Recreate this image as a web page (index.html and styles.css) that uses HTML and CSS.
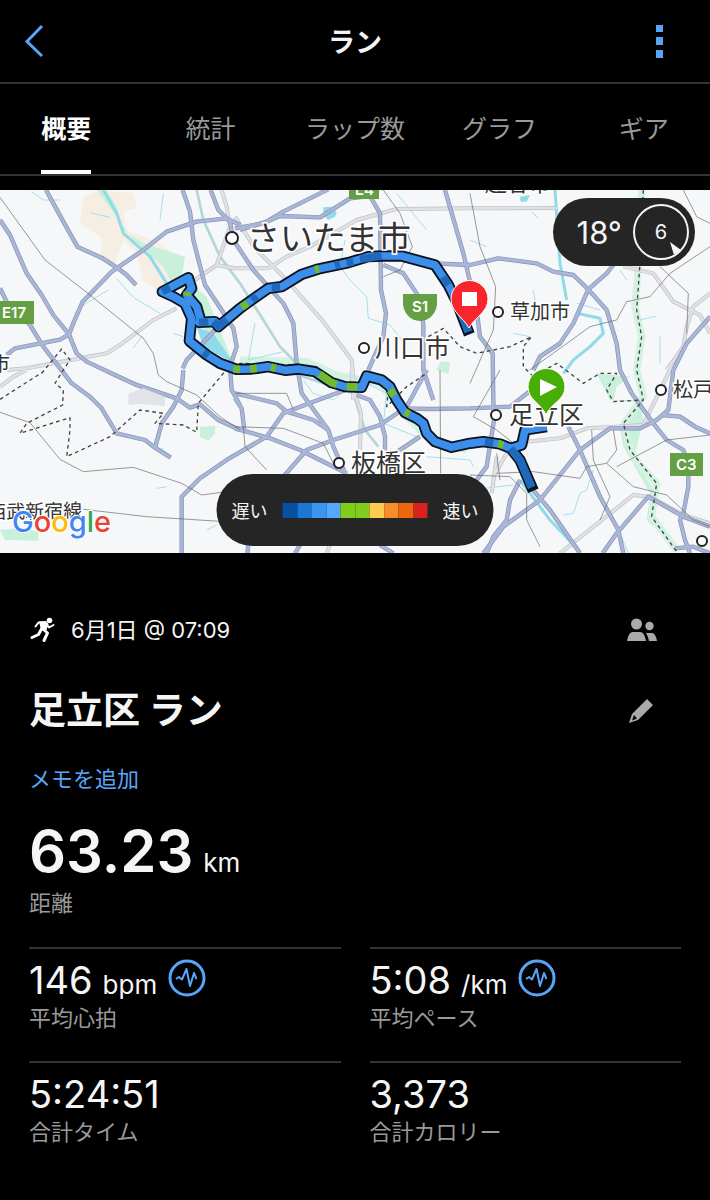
FILE: index.html
```html
<!DOCTYPE html>
<html lang="ja">
<head>
<meta charset="utf-8">
<meta name="viewport" content="width=device-width, initial-scale=1">
<title>ラン</title>
<link rel="stylesheet" href="styles.css">
</head>
<body>
<header class="topbar">
  <button class="icon-button" aria-label="戻る"><svg width="20" height="34" viewBox="0 0 20 34"><path class="chevron" d="M18 2 3 17.5 18 32"/></svg></button>
  <h1 class="topbar-title">ラン</h1>
  <button class="icon-button menu-button" aria-label="メニュー"><svg width="7" height="34" viewBox="0 0 7 34"><path class="dots" d="M0 1h7v7H0zM0 13h7v8H0zM0 26h7v8H0z"/></svg></button>
</header>
<nav class="tabs">
  <a class="tab active" href="#summary" aria-current="page">概要</a>
  <a class="tab" href="#stats">統計</a>
  <a class="tab" href="#laps">ラップ数</a>
  <a class="tab" href="#charts">グラフ</a>
  <a class="tab" href="#gear">ギア</a>
</nav>
<main id="summary">
<section class="map" aria-label="ルート">
<svg class="map-canvas" viewBox="0 190 710 363">
  <defs>
    <g id="roads">
      <path d="M138 570 190 665 232 740 308 775 350 802 380 825 408 855"/>
      <path d="M0 660 30 705 80 820 125 885 160 945 207 1003 230 1060 260 1085 345 1125 405 1153 530 1195 570 1223 600 1213 655 1260 720 1290"/>
      <path d="M20 1065 45 1045 180 1019 207 1003 222 965 248 905 335 815 430 750 500 695 590 665 680 655 720 675"/>
      <path d="M0 865 20 905 90 975 130 1040 215 1150 270 1190 305 1225 350 1300 435 1320 465 1343 512 1373"/>
      <path d="M548 570 570 635 580 720 615 855 665 930 700 985 710 1040 690 1100 695 1170 720 1215"/>
      <path d="M632 570 655 630 690 665 700 720 760 810 850 910 880 970 890 1090 905 1180 985 1290 1000 1340 1040 1430"/>
      <path d="M720 690 800 665 850 635 960 580 985 568"/>
      <path d="M705 685 790 670 840 648 960 652 1050 595 1110 588 1140 640 1143 870 1158 940 1150 1010 1105 1110"/>
      <path d="M1150 795 1210 820 1250 880 1270 970 1270 1110 1300 1200"/>
      <path d="M1335 570 1390 760 1430 930 1440 1010 1478 1060 1480 1200 1482 1260 1460 1400 1430 1440"/>
      <path d="M1305 790 1410 795 1495 775 1610 790 1660 815 1720 825 1765 868 1820 820 1840 795"/>
      <path d="M1765 868 1720 970 1680 1030 1620 1070 1600 1110"/>
      <path d="M1765 868 1820 930 1850 1030 1860 1110 1895 1180 1960 1270 2000 1320 2050 1350 2065 1390 2065 1460 2050 1540 2040 1560 2055 1620 2070 1660"/>
      <path d="M2130 950 2060 1030 2020 1110 2005 1230 1970 1260 1920 1285 1830 1285 1740 1350 1620 1500 1510 1580 1450 1660"/>
      <path d="M1215 1225 1290 1227 1410 1225 1530 1220 1620 1150"/>
      <path d="M1985 1245 2040 1250 2085 1280 2130 1300"/>
      <path d="M1705 1280 1740 1350 1800 1490 1855 1590 1870 1660"/>
      <path d="M1595 1465 1650 1530 1740 1660"/>
      <path d="M1808 1660 1850 1600 1945 1490 2050 1550 2130 1580"/>
      <path d="M2025 1645 2080 1640 2130 1660"/>
      <path d="M550 1110 545 1170 520 1220 485 1270 465 1343"/>
      <path d="M548 1105 560 1080 640 995 690 950"/>
      <path d="M545 1660 545 1490 600 1435 680 1380 800 1310 850 1240 940 1205 1050 1165 1140 1130"/>
      <path d="M705 1180 830 1210 860 1235 940 1260 985 1290"/>
      <path d="M705 1195 725 1225 733 1290M705 1285 810 1315 900 1350 960 1380 1040 1420"/>
      <path d="M850 1430 920 1350 1000 1320 1140 1275 1220 1220 1280 1110"/>
      <path d="M1070 1185 1110 1200 1140 1250 1155 1310 1155 1390M1170 1370 1260 1310"/>
      <path d="M1560 1440 1530 1500 1520 1560 1480 1610 1460 1660M745 1635 742 1660M900 1635 885 1660M1140 1635 1180 1660"/>
    </g>
    <g id="minor">
      <path d="M20 1110 80 1105 160 1090 320 1060 360 1035 460 960 530 925M585 840 650 795 690 680 680 620 665 570"/>
      <path d="M0 1160 40 1130 80 1110M650 795 705 805 805 805 860 770 930 740 1070 660 1190 627 1410 625 1670 624"/>
      <path d="M705 650 765 745 860 840 970 965 1055 1080 1065 1180 1083 1240 1080 1350M1055 1110 1060 1200"/>
      <path d="M1870 800 1960 820 2020 905 2100 945 2130 1000M2130 880 2080 920 2060 980 2050 1040 2000 1110M1580 1325 1680 1315 1760 1285 1850 1280 1930 1275 2010 1110"/>
      <path d="M1680 1660 1900 1485 1950 1490 2050 1545 2130 1570M1490 1370 1475 1480M1480 1430 1520 1360M990 1635 980 1660"/>
    </g>
  </defs>
  <rect class="land" x="0" y="190" width="710" height="363"/>
  <g transform="scale(.33333)">
    <path class="sand" d="M250 590 300 570 400 580 410 625 370 635 380 690 480 730 530 770 500 850 470 870 430 840 410 760 370 720 340 800 300 760 310 720 300 710 240 670Z"/>
    <path class="park" d="M290 570 320 570 350 620 370 690 430 730 555 770 545 830 620 890 700 1090 640 1020 590 960 580 880 520 860 490 800 400 720 350 650ZM600 1280 645 1278 645 1300 625 1322 600 1310ZM0 1590 60 1585 115 1595 115 1622 15 1620ZM1320 1085 1350 1085 1345 1122 1310 1110ZM1890 1130 1850 1160 1840 1205 1920 1205 1930 1260 1900 1380 1950 1450 1975 1490 1945 1520 1960 1580 2040 1650 1980 1600 1940 1560 1950 1480 1870 1340 1860 1280 1910 1200 1830 1200 1790 1120Z"/>
    <path class="park-line" d="M720 1080 920 1085 1010 1125 1140 1150 1220 1250 1280 1310 1400 1350"/>
    <path class="park-line" d="M1925 570 1915 800 1905 920 1925 1010 1910 1110 1930 1190 1870 1275 1905 1380 1970 1450 1955 1550 2030 1650"/>
    <path class="bank" d="M590 570 610 660 660 770 720 850 790 960 840 1040 895 1095M895 1125 1060 1180 1095 1290 1135 1340"/>
    <path class="water" d="M970 622 1000 620 1010 640 1005 650 985 660 970 645ZM1560 590 1590 585 1580 605 1562 605ZM590 980 640 1000 700 1090 610 1040Z"/>
    <path class="river" d="M310 570 350 640 370 700 450 770 500 850M1665 570 1680 790 1700 900M1730 940 1800 955 1810 1000 1770 1040 1720 1080 1690 1120M1560 1440 1650 1560 1740 1655"/>
    <path class="stream" d="M272 638 330 652M490 580 480 660M95 575 130 600 180 600M350 835 380 870 405 895 480 940M250 915 325 870M400 1045 425 1010M520 1000 550 1010M1035 720 1020 800 1050 840 1100 890 1105 955 1170 975 1205 1020M765 970 745 1080 850 1055M1190 580 1280 690M1595 635 1615 655M1410 720 1460 740M1540 1000 1590 1010M1600 870 1605 900M1730 910 1800 930M1860 810 1880 840M1970 950 1960 950 1920 960M1980 1010 1980 1090M910 1140 940 1180 1000 1200 1060 1150M1100 1150 1160 1180 1150 1270 1250 1310M1280 1370 1410 1380 1420 1400M1780 1410 1760 1470 1740 1480 1720 1540 1690 1545M1770 1420 1860 1600 1885 1660M1410 1470 1540 1455M470 1355 490 1345M470 1465 500 1460M620 1590 650 1575"/>
    <use href="#minor" class="minor-edge"/><use href="#minor" class="minor-fill"/>
    <use href="#roads" class="road-edge"/><use href="#roads" class="road-fill"/>
    <path class="rail" d="M0 592 135 780 270 885 430 1015 460 1060 475 1125 500 1145 590 1185 660 1250 720 1290M0 1237 90 1268 180 1378 250 1415 400 1402 545 1450 605 1485 680 1475M250 1528 440 1550 660 1564M1410 580 1440 740 1487 860 1480 990 1410 1150M1150 570 1200 640 1237 740 1200 810 1150 830M1590 1110 1770 980 1850 960 1880 905 1950 890 2010 820 2130 740M2050 570 2090 650 2130 670M1980 800 2065 880 2060 1000M705 1280 850 1285 970 1330 1010 1410M730 1280 735 1340 800 1410M1320 1110 1322 1420M1490 1420 1600 1415 1740 1435 1760 1400 1820 1390 1900 1460 2000 1485 2080 1560 2130 1580M1775 1290 1780 1380 1830 1490 1800 1560M1840 1290 1850 1350 1820 1390M1850 1400 2000 1320 2130 1305M1500 1110 1420 1250 1490 1290 1560 1345M1410 1425 1530 1430 1580 1480 1580 1560 1620 1640M1500 1440 1490 1360M705 1180 860 1180 880 1230"/>
    <path class="border" d="M125 1120 185 1047 210 1080 190 1110 165 1150 190 1170 188 1215 80 1270 60 1300 210 1253 210 1290 200 1370 330 1310 420 1230 490 1240 465 1270 550 1275 590 1297 595 1210 670 1120 720 1090 900 1095M0 1198 130 1115M1285 1010 1330 985 1380 1040 1430 1060 1530 1040 1595 1010 1570 1040 1570 1100 1600 1130 1670 1090 1750 1150 1800 1120 1850 1120 1820 1170 1840 1205 1925 1200M1930 570 1920 790 1910 930 1925 1010 1910 1110 1930 1200 1870 1270 1890 1350 1970 1450 1955 1550 2030 1655M1165 1170 1160 1220 1220 1160 1280 1120"/>
    <path class="builtup" d="M385 1180 430 1165 495 1190 495 1218 430 1212 385 1215Z"/>
    <g id="route">
      <path class="route-outline" d="M1640 1280 1575 1290 1565 1335 1532 1345M1600 1472 1560 1380 1532 1345 1500 1332 1450 1325 1410 1330 1355 1342 1305 1325 1280 1300 1270 1270 1250 1255 1215 1238 1190 1200 1170 1160 1145 1140 1100 1128 1085 1162 1035 1160 995 1148 945 1115 895 1107 855 1111 805 1100 755 1107 710 1108 660 1090 620 1065 568 1023 575 955 555 910 520 890 487 875 565 833 575 865 560 885 590 920 600 955 597 967 645 965 655 980 720 925 755 900 805 865 845 860 905 823 955 807 1045 788 1105 770 1145 768 1205 768 1305 795 1345 855 1370 905 1408 1003"/>
      <path class="route-line" d="M1640 1280 1575 1290 1565 1335 1532 1345M1595 1462 1560 1380 1532 1345 1500 1332 1450 1325 1410 1330 1355 1342 1305 1325 1280 1300 1270 1270 1250 1255 1215 1238 1190 1200 1170 1160 1145 1140 1100 1128 1085 1162 1035 1160 995 1148 945 1115 895 1107 855 1111 805 1100 755 1107 710 1108 660 1090 620 1065 568 1023 575 955 555 910 520 890 487 875 565 833 575 865 560 885 590 920 600 955 597 967 645 965 655 980 720 925 755 900 805 865 845 860 905 823 955 807 1045 788 1105 770 1145 768 1205 768 1305 795 1345 855 1370 905 1405 995"/>
      <path class="route-slow" d="M1595 1462 1560 1380 1532 1345M1480 1329 1455 1325M1330 830 1345 855M1390 955 1405 995M1080 778 1145 768M1005 797 1020 793M1040 789 1060 785M755 900 770 888M815 862 840 860M640 965 655 978 680 958M487 875 510 863M597 967 625 966M610 1057 625 1067"/>
      <path class="route-good" d="M700 1107 720 1108M750 1107 770 1105M813 1101 828 1105M958 1122 995 1148 1010 1153M1040 1160 1072 1161M1170 1170 1182 1188M1215 1236 1228 1243M1494 1330 1510 1336M562 876 560 888M725 922 742 910M945 809 957 806"/>
    </g>
  </g>
  <g class="roadsign">
    <path d="M0 301h34v23H0zM349 185h30v14h-30zM670 453h33v23h-33zM403 294h34v11q-3 15-17 16-14-1-17-16z"/>
    <text x="2" y="318">E17</text><text x="355" y="195">E4</text><text x="676" y="470">C3</text><text x="412" y="312">S1</text>
  </g>
  <g class="places">
    <text x="485" y="191" font-size="22">越谷市</text>
    <circle cx="232" cy="238" r="6"/><text x="247" y="250" font-size="33">さいたま市</text>
    <circle cx="364" cy="348" r="5"/><text x="375" y="357" font-size="25">川口市</text>
    <circle cx="498" cy="312" r="5"/><text x="510" y="319" font-size="20">草加市</text>
    <circle cx="496" cy="415" r="5"/><text x="509" y="424" font-size="25">足立区</text>
    <circle cx="339" cy="463" r="5"/><text x="351" y="472" font-size="25">板橋区</text>
    <circle cx="661" cy="390" r="5"/><text x="673" y="397" font-size="20">松戸市</text>
    <circle cx="702" cy="541" r="5"/>
    <text x="-9" y="371" font-size="19">市</text>
    <text x="-13" y="518" font-size="19" transform="rotate(-1 40 510)">西武新宿線</text>
  </g>
  <path class="pin-end" d="M469 328C463 317 451 312 451 299a18.500 18.500 0 0 1 37 0C488 312 475 317 469 328Z"/><path class="pin-glyph" d="M462 292h15v14h-15z"/>
  <path class="pin-start" d="M546 415C541 403 528 400 528 387a18.500 18.500 0 0 1 37 0C565 400 551 403 546 415Z"/><path class="pin-glyph" d="M540 379 557 387 540 396Z"/>
  <text class="google" x="12" y="532"><tspan fill="#4285f4">G</tspan><tspan fill="#ea4335">o</tspan><tspan fill="#fbbc05">o</tspan><tspan fill="#4285f4">g</tspan><tspan fill="#34a853">l</tspan><tspan fill="#ea4335">e</tspan></text>
</svg>
<div class="weather">
  <span>18°</span>
  <svg width="58" height="58" viewBox="0 0 58 58"><circle class="wind-ring" cx="29" cy="29" r="27"/><text class="wind-speed" x="29" y="36">6</text><path class="wind-arrow" d="M38 39 49 47 42 52Z"/></svg>
</div>
<div class="legend">
  <span>遅い</span>
  <div class="scale"><i class="s1"></i><i class="s2"></i><i class="s3"></i><i class="s4"></i><i class="s5"></i><i class="s5"></i><i class="s6"></i><i class="s7"></i><i class="s8"></i><i class="s9"></i></div>
  <span>速い</span>
</div>
</section>
<section class="details">
  <div class="row meta">
    <svg width="28" height="28" viewBox="0 0 28 28"><circle class="runner-fill" cx="20.500" cy="4.500" r="2.800"/><path class="runner-fill" d="M10 5.500 17 5 19.500 8 17.500 14 12 14Z"/><path class="runner" d="M15.500 6.500 9.500 6.500 6.500 10.500M18 8.500 20 11.500 24.500 9"/><path class="runner-leg" d="M14 13 18.500 17 15 24.500M12.500 13 9.500 18.500 3 21.500"/></svg>
    <time class="grow">6月1日 @ 07:09</time>
    <button class="icon-button" aria-label="公開設定"><svg class="grey" width="32" height="24" viewBox="0 0 32 24"><circle cx="10.500" cy="6" r="5.500"/><circle cx="23.500" cy="8" r="4.200"/><path d="M1 23Q2.500 14 7 14h7q4.500 0 6 9ZM20 15h6q3.500 0 5 8h-8q-1-5-3-8Z"/></svg></button>
  </div>
  <div class="row heading">
    <h2 class="grow">足立区 ラン</h2>
    <button class="icon-button" aria-label="名前を編集"><svg class="grey" width="32" height="26" viewBox="0 0 32 26"><path fill-rule="evenodd" d="M21 1 27 7 12 22 3 25 6 16ZM8 17 6 22.500 11 20.500Z"/></svg></button>
  </div>
  <a class="note" href="#note">メモを追加</a>
  <div class="distance"><strong>63.23</strong><span class="unit">km</span></div>
  <p class="label">距離</p>
  <dl class="stats">
    <div class="stat"><dd>146<span class="unit">bpm</span><svg class="pulse" width="38" height="38" viewBox="0 0 38 38"><circle cx="19" cy="19" r="17"/><path d="M8 20 11 18 14 20.500 18.500 10 22 27 26 14 28.500 20"/></svg></dd><dt class="label">平均心拍</dt></div>
    <div class="stat"><dd>5:08<span class="unit">/km</span><svg class="pulse" width="38" height="38" viewBox="0 0 38 38"><circle cx="19" cy="19" r="17"/><path d="M8 20 11 18 14 20.500 18.500 10 22 27 26 14 28.500 20"/></svg></dd><dt class="label">平均ペース</dt></div>
    <div class="stat"><dd>5:24:51</dd><dt class="label">合計タイム</dt></div>
    <div class="stat"><dd>3,373</dd><dt class="label">合計カロリー</dt></div>
  </dl>
</section>
</main>
</body>
</html>
```
FILE: styles.css
```css
* { box-sizing: border-box; }
body { margin: 0; background: #000; color: #f5f5f5; font-family: Inter, "Noto Sans CJK JP", sans-serif; overflow-x: hidden; }
h1, h2, p, dl, dd { margin: 0; }
a { text-decoration: none; }
svg { display: block; }
.icon-button { background: none; border: 0; padding: 0; color: inherit; display: flex; }

.topbar { display: grid; grid-template-columns: 48px 1fr 48px; align-items: center; height: 84px; padding: 0 24px; border-bottom: 2px solid #333; }
.topbar-title { font-size: 27px; line-height: 40px; padding-top: 4px; font-weight: 700; text-align: center; }
.menu-button { justify-content: flex-end; padding-right: 23px; }
.chevron { fill: none; stroke: #58a5f8; stroke-width: 3; }
.dots { fill: #58a5f8; }

.tabs { display: grid; grid-template-columns: repeat(5, 1fr); justify-items: center; height: 92px; margin: 0 -6px; border-bottom: 2px solid #333; }
.tab { color: #999; font-size: 25px; line-height: 90px; height: 90px; white-space: nowrap; }
.tab.active { color: #fff; font-weight: 700; box-shadow: inset 0 -4px #fff; }

.map { position: relative; margin-top: 14px; }
.map-canvas { width: 100%; height: auto; }
.map-canvas path, .map-canvas use { stroke-linejoin: round; }
.land { fill: #f6f7f8; }
.sand { fill: #f6eee3; }
.park { fill: #c8f0da; }
.park-line { fill: none; stroke: #d3f3e2; stroke-width: 22; }
.builtup { fill: #e2e3e8; }
.bank { fill: none; stroke: #b3d6d9; stroke-width: 8; }
.water { fill: #8fdbea; }
.river { fill: none; stroke: #8fdbea; stroke-width: 9; }
.stream { fill: none; stroke: #a4e0ec; stroke-width: 3; }
.minor-edge { fill: none; stroke: #bfc0c6; stroke-width: 12; }
.minor-fill { fill: none; stroke: #e0e1e5; stroke-width: 8; }
.road-edge { fill: none; stroke: #8592b7; stroke-width: 13; }
.road-fill { fill: none; stroke: #a9b6d6; stroke-width: 9; }
.rail { fill: none; stroke: #666; stroke-width: 2; }
.border { fill: none; stroke: #444; stroke-width: 4; stroke-dasharray: 11 10; }
.route-outline { fill: none; stroke: #0b1220; stroke-width: 34; }
.route-line { fill: none; stroke: #3b8eea; stroke-width: 23; }
.route-slow { fill: none; stroke: #1f69bd; stroke-width: 23; }
.route-good { fill: none; stroke: #72b92e; stroke-width: 23; }
.roadsign path { fill: #64a043; }
.roadsign text { fill: #fff; font-size: 15px; font-weight: 600; }
.places text { fill: #333; stroke: #fff; stroke-width: 3px; paint-order: stroke; }
.places circle { fill: #fff; stroke: #222; stroke-width: 2; }
.pin-end { fill: #f8262c; stroke: #fff; stroke-width: 1; }
.pin-start { fill: #48ad04; stroke: #fff; stroke-width: 1; }
.pin-glyph { fill: #fff; }
.google { font-size: 29px; font-weight: 500; stroke: #fff; stroke-width: 2px; paint-order: stroke; }

.weather { position: absolute; top: 8px; right: 15px; height: 68px; padding: 0 5px 0 24px; border-radius: 34px; background: #252525; display: flex; align-items: center; gap: 10px; font-size: 31px; }
.wind-ring { fill: none; stroke: #f5f5f5; stroke-width: 2; }
.wind-speed { fill: #f5f5f5; font-size: 20px; text-anchor: middle; }
.wind-arrow { fill: #f5f5f5; }
.legend { position: absolute; left: 50%; bottom: 7px; transform: translateX(-50%); height: 72px; padding: 0 15px; border-radius: 36px; background: #252525; display: flex; align-items: center; gap: 15px; font-size: 18px; white-space: nowrap; }
.scale { display: grid; grid-template-columns: repeat(10, 1fr); width: 145px; height: 15px; }
.s1 { background: #0450a2; } .s2 { background: #1c76d6; } .s3 { background: #3994f2; }
.s4 { background: #56a8fc; } .s5 { background: #82cc1d; } .s6 { background: #fdcb4d; }
.s7 { background: #f78d2b; } .s8 { background: #ec6610; } .s9 { background: #d9221f; }

.details { padding: 60px 29px 20px; }
.row { display: flex; align-items: center; padding-right: 23px; }
.grow { flex: 1; }
.meta { font-size: 22px; line-height: 34px; gap: 14px; }
.runner, .runner-leg { fill: none; stroke: #fff; stroke-width: 2; stroke-linecap: round; stroke-linejoin: round; }
.runner-leg { stroke-width: 3; }
.runner-fill { fill: #fff; }
.grey { fill: #aaa; }
.heading { margin-top: 36px; }
.heading h2 { font-size: 37px; line-height: 56px; font-weight: 700; }
.note { display: block; margin-top: 24px; color: #58a5f8; font-size: 22px; line-height: 32px; }
.distance { display: flex; align-items: baseline; margin-top: 20px; }
.distance strong { font-size: 58px; line-height: 72px; font-weight: 600; }
.unit { font-size: 26px; line-height: 32px; margin-left: 10px; }
.label { color: #999; font-size: 22px; line-height: 32px; }
.stats { display: grid; grid-template-columns: 1fr 1fr; column-gap: 29px; margin-top: 28px; }
.stat { display: flex; flex-direction: column; height: 114px; border-top: 2px solid #333; padding-top: 10px; }
.stat dd { display: flex; align-items: baseline; height: 43px; font-size: 38px; line-height: 42px; }
.pulse { margin-left: 11px; fill: none; stroke: #58a5f8; stroke-width: 3; stroke-linejoin: round; align-self: flex-start; }
.pulse path { stroke-width: 2; }
```
